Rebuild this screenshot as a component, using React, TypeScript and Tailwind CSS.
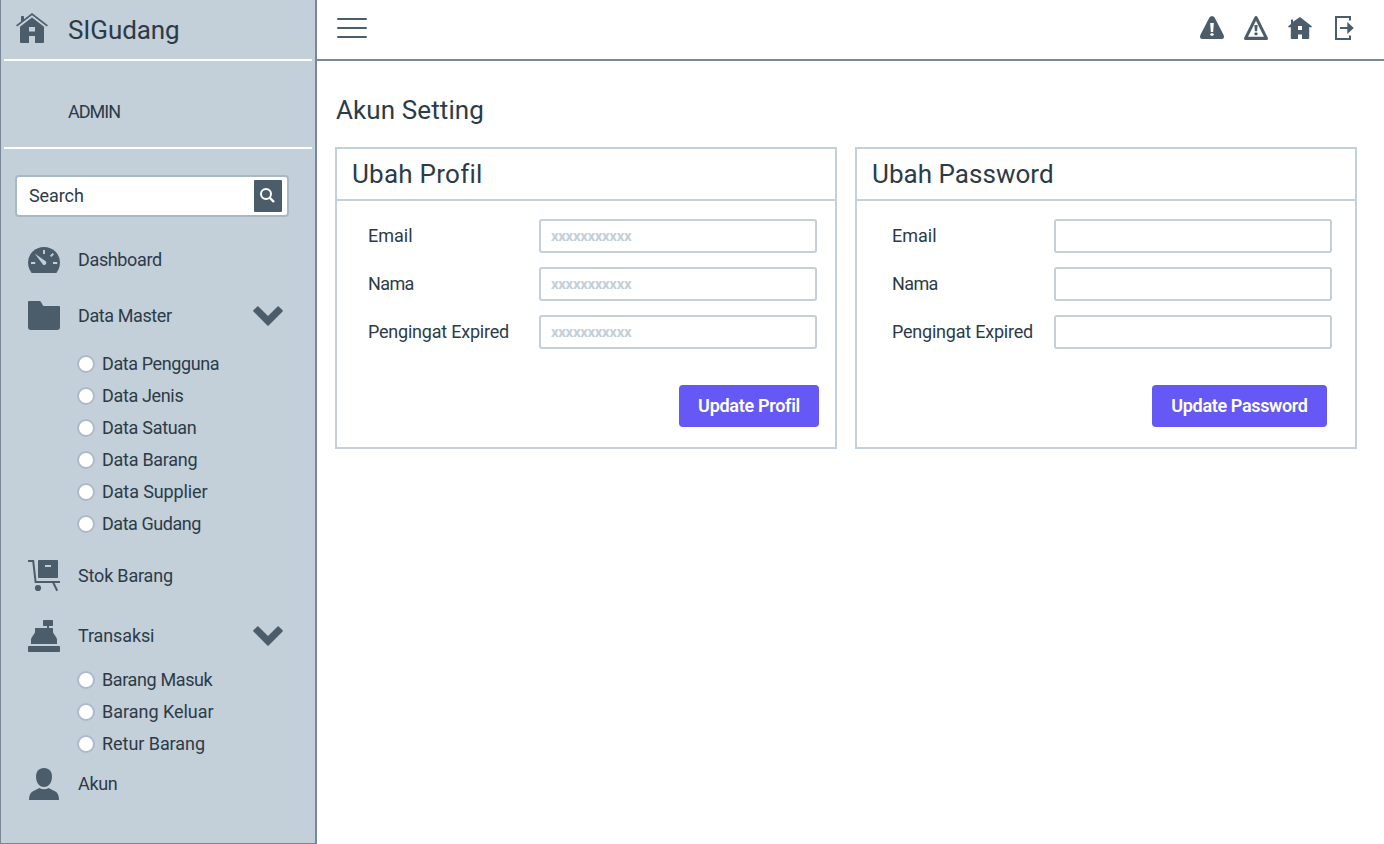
import React from 'react';

type IconProps = { className?: string };

function BrandHouse() {
  return (
    <svg width="32" height="31" viewBox="0 0 32 31" fill="currentColor">
      <path d="M5 3.6Q5 3 5.6 3H7.4Q8 3 8 3.6V7L5 9.4Z" />
      <path d="M.6 12.9L16 1.1L31.4 12.9" fill="none" stroke="currentColor" strokeWidth="1.7" />
      <path
        fillRule="evenodd"
        d="M16 4.6L28 13.8V29Q28 30 27 30H19V23H13V30H5Q4 30 4 29V13.8ZM13 14V18.5H19V14Z"
      />
    </svg>
  );
}

function SmallHouse() {
  return (
    <svg width="24" height="24" viewBox="0 0 24 24" fill="currentColor">
      <path
        fillRule="evenodd"
        d="M3 3.4H5V5.8L12 1L24 10.4L23 11.6L21.2 11V22Q21.2 23 20.2 23H14V18.6H10V23H3.8Q2.8 23 2.8 22V11L1 11.6L0 10.4L3 8ZM10 10V14H14V10Z"
      />
    </svg>
  );
}

function AlertSolid() {
  return (
    <svg width="24" height="24" viewBox="0 0 24 24">
      <path
        d="M12 0Q13.6 0 14.6 1.5L23.5 18.8Q25 23 21.8 23H2.2Q-1 23 .5 18.8L9.4 1.5Q10.4 0 12 0Z"
        fill="currentColor"
      />
      <path d="M10.2 7H13.8L13.2 16H10.8Z" fill="white" />
      <rect x="10.3" y="17.2" width="3.4" height="2.6" rx="1.2" fill="white" />
    </svg>
  );
}

function AlertOutline() {
  return (
    <svg width="24" height="24" viewBox="0 0 24 24">
      <path
        fillRule="evenodd"
        fill="currentColor"
        d="M12 0Q13 0 13.5 1L23.7 21.5Q24.6 24 22.4 24H1.6Q-.6 24 .3 21.5L10.5 1Q11 0 12 0ZM12 4.8L4 20.8H20Z"
      />
      <path d="M10.4 9H13.6L13.1 15.3H10.9Z" fill="currentColor" />
      <rect x="10.4" y="16.5" width="3.2" height="2.8" rx="1" fill="currentColor" />
    </svg>
  );
}

function Exit() {
  return (
    <svg width="19" height="24" viewBox="0 0 19 24">
      <path d="M15 4.5V1H1V23H15V19.5" fill="none" stroke="currentColor" strokeWidth="2" />
      <path d="M5 11H12.3V5.9L18.8 12L12.3 18.1V13H5Z" fill="currentColor" />
    </svg>
  );
}

function Gauge() {
  return (
    <svg width="32" height="32" viewBox="0 0 32 32">
      <path d="M3.6 29Q0 24 0 18.5A16 15.5 0 0 1 32 18.5Q32 24 28.4 29Z" fill="currentColor" />
      <g stroke="#c3cfd9" strokeWidth="1.9">
        <path d="M16 6V10M3 19H7.2M25 19H29.2M22.6 12.4L25.3 9.8" />
      </g>
      <path d="M6.8 9.6L17.7 17.2Q18.5 18 18 20Q17 21.4 15.1 20.7Z" fill="#c3cfd9" />
    </svg>
  );
}

function Folder() {
  return (
    <svg width="32" height="32" viewBox="0 0 32 32" fill="currentColor">
      <path d="M0 2Q0 1 1 1H11.6Q12.3 1 12.8 1.8L15.3 6H31Q32 6 32 7V27Q32 30 29 30H3Q0 30 0 27Z" />
    </svg>
  );
}

function Trolley() {
  return (
    <svg width="32" height="32" viewBox="0 0 32 32">
      <path d="M0 1H5.2L7.6 22H32" fill="none" stroke="currentColor" strokeWidth="2" />
      <rect x="10" y="0" width="20" height="18" rx=".7" fill="currentColor" />
      <rect x="17" y="5" width="6" height="2" fill="#c3cfd9" />
      <circle cx="10" cy="28" r="3.1" fill="currentColor" />
      <path d="M25.2 22.5L29.2 30.8" stroke="currentColor" strokeWidth="2" />
    </svg>
  );
}

function Register() {
  return (
    <svg width="32" height="32" viewBox="0 0 32 32" fill="currentColor">
      <rect x="15" y="0" width="10" height="6" rx=".8" />
      <rect x="19" y="5" width="2" height="4" />
      <path d="M7 8.6Q7 8 7.6 8H24.4Q25 8 25 8.6V12.5L28.6 18Q29 18.8 29 20V24H3V20Q3 18.8 3.4 18L7 12.5Z" />
      <rect x="0" y="26" width="32" height="6" rx=".7" />
    </svg>
  );
}

function Person() {
  return (
    <svg width="32" height="32" viewBox="0 0 32 32" fill="currentColor">
      <path d="M16 0C21.3 0 24 3.8 24 8.5C24 14.5 20.8 19 16 19C11.2 19 8 14.5 8 8.5C8 3.8 10.7 0 16 0Z" />
      <path d="M1 32Q1 25.5 5 23.3Q8 21.7 11.3 20Q16 22.4 20.7 20Q24 21.7 27 23.3Q31 25.5 31 32Z" />
    </svg>
  );
}

function Chevron({ className }: IconProps) {
  return (
    <svg className={className} width="30" height="20" viewBox="0 0 30 20" fill="currentColor">
      <path d="M4.3.4Q4.8-.1 5.4.4L15 9.9L24.6.4Q25.2-.1 25.7.4L29.6 4.3Q30.1 4.8 29.6 5.4L15.6 19.6Q15 20.1 14.4 19.6L.4 5.4Q-.1 4.8.4 4.3Z" />
    </svg>
  );
}

function Magnifier() {
  return (
    <svg width="16" height="16" viewBox="0 0 16 16" fill="none" stroke="white" strokeWidth="2">
      <circle cx="6" cy="6" r="5" />
      <path d="M9.5 9.5L14 14" strokeWidth="2.4" />
    </svg>
  );
}

type ItemProps = {
  icon: React.ReactNode;
  label: string;
  tracking: string;
  size: string;
  expandable?: boolean;
};

function NavItem({ icon, label, tracking, size, expandable }: ItemProps) {
  return (
    <a className={`flex items-center pl-[27px] pr-8 ${size}`}>
      <span className="mr-[18px]">{icon}</span>
      <span className={`text-[#2c3b48] ${tracking}`}>{label}</span>
      {expandable && <Chevron className="ml-auto" />}
    </a>
  );
}

function SubItem({ label, tracking }: { label: string; tracking: string }) {
  return (
    <li className="flex h-8 items-center pl-[76px]">
      <span className="mr-[7px] size-[18px] rounded-full border-2 border-[#adbbc8] bg-white" />
      <span className={`text-[#2c3b48] ${tracking}`}>{label}</span>
    </li>
  );
}

const masterItems = [
  { label: 'Data Pengguna', tracking: 'tracking-[-0.4px]' },
  { label: 'Data Jenis', tracking: 'tracking-[-0.35px]' },
  { label: 'Data Satuan', tracking: 'tracking-[-0.3px]' },
  { label: 'Data Barang', tracking: 'tracking-[-0.27px]' },
  { label: 'Data Supplier', tracking: 'tracking-[-0.12px]' },
  { label: 'Data Gudang', tracking: 'tracking-[-0.46px]' },
];

const transactionItems = [
  { label: 'Barang Masuk', tracking: 'tracking-[-0.38px]' },
  { label: 'Barang Keluar', tracking: 'tracking-[-0.02px]' },
  { label: 'Retur Barang', tracking: 'tracking-[-0.05px]' },
];

function Sidebar() {
  return (
    <aside className="h-full w-[317px] shrink-0 border-r-2 border-b border-l border-[#788896] bg-[#c3cfd9] text-[#4b5c6b]">
      <div className="mx-[3px] flex h-[61px] items-center border-b-2 border-white pl-3">
        <span className="-mt-0.5">
          <BrandHouse />
        </span>
        <span className="ml-5 pt-px text-[26px] tracking-[-0.1px] text-[#2c3b48]">SIGudang</span>
      </div>
      <div className="mx-[3px] flex h-[88px] items-center border-b-2 border-white pt-4 pl-16">
        <span className="tracking-[-1px] text-[#2c3b48]">ADMIN</span>
      </div>
      <div className="mt-[26px] ml-3.5 flex h-[42px] w-[274px] items-center justify-between rounded-[4px] border-2 border-[#a9b8c5] bg-white pr-[5px] pl-3">
        <span className="tracking-[-0.1px] text-[#2c3b48]">Search</span>
        <button className="flex h-8 w-7 items-center justify-center rounded-[1px] bg-[#4b5c6b]">
          <Magnifier />
        </button>
      </div>
      <nav className="mt-[15px]">
        <NavItem icon={<Gauge />} label="Dashboard" tracking="tracking-[-0.36px]" size="h-14" />
        <NavItem icon={<Folder />} label="Data Master" tracking="tracking-[-0.4px]" size="h-14" expandable />
        <ul className="mt-1 mb-1.5">
          {masterItems.map((item) => (
            <SubItem key={item.label} {...item} />
          ))}
        </ul>
        <NavItem icon={<Trolley />} label="Stok Barang" tracking="tracking-[-0.18px]" size="h-[60px]" />
        <NavItem icon={<Register />} label="Transaksi" tracking="tracking-[-0.12px]" size="mt-0.5 h-14" expandable />
        <ul>
          {transactionItems.map((item) => (
            <SubItem key={item.label} {...item} />
          ))}
        </ul>
        <NavItem icon={<Person />} label="Akun" tracking="tracking-[-0.35px]" size="h-12" />
      </nav>
    </aside>
  );
}

function TopBar() {
  return (
    <header className="flex h-[61px] items-center justify-between border-b-2 border-[#788896] pr-[30px] pb-[3px] pl-5 text-[#4b5c6b]">
      <button className="flex w-[30px] flex-col gap-[7px]">
        <span className="h-0.5 w-full rounded-full bg-[#4b5c6b]" />
        <span className="h-0.5 w-full rounded-full bg-[#4b5c6b]" />
        <span className="h-0.5 w-full rounded-full bg-[#4b5c6b]" />
      </button>
      <div className="flex items-center">
        <span className="mr-5"><AlertSolid /></span>
        <span className="mr-5"><AlertOutline /></span>
        <span className="mr-[23px]"><SmallHouse /></span>
        <Exit />
      </div>
    </header>
  );
}

type CardProps = {
  title: string;
  titleTracking: string;
  bodyPadding: string;
  value?: string;
  action: string;
  actionClass: string;
};

const fields = [
  { label: 'Email', tracking: 'tracking-[0px]' },
  { label: 'Nama', tracking: 'tracking-[-0.6px]' },
  { label: 'Pengingat Expired', tracking: 'tracking-[-0.22px]' },
];

function SettingCard({ title, titleTracking, bodyPadding, value, action, actionClass }: CardProps) {
  return (
    <section className="h-[302px] border-2 border-[#c3cfd9]">
      <h2 className={`flex h-[52px] items-center border-b-2 border-[#c3cfd9] pl-[15px] text-[26px] ${titleTracking}`}>
        {title}
      </h2>
      <div className={`flex flex-col gap-3.5 pt-[18px] ${bodyPadding}`}>
        {fields.map((field) => (
          <label key={field.label} className="flex h-[34px] items-center justify-between">
            <span className={field.tracking}>{field.label}</span>
            <span className="flex h-full w-[278px] items-center rounded-[3px] border-2 border-[#c3cfd9] pt-px pl-2.5 text-[15px] font-bold tracking-[-0.34px] text-[#c3cfd9]">
              {value}
            </span>
          </label>
        ))}
      </div>
      <div className="mt-9 flex justify-end">
        <button
          className={`flex h-[42px] items-center justify-center rounded-[4px] bg-[#6558f5] font-semibold text-white ${actionClass}`}
        >
          {action}
        </button>
      </div>
    </section>
  );
}

export default function App() {
  return (
    <div className="flex h-[844px] w-[1384px] overflow-hidden bg-white font-[Roboto,'Liberation_Sans',sans-serif] text-[18px] leading-none whitespace-nowrap text-[#2c3b48]">
      <Sidebar />
      <div className="flex-1">
        <TopBar />
        <main className="pt-9 pl-[18px]">
          <h1 className="pl-px text-[26px] tracking-[0.1px]">Akun Setting</h1>
          <div className="mt-6 grid w-[1022px] grid-cols-2 gap-[18px]">
            <SettingCard
              title="Ubah Profil"
              titleTracking="tracking-[0.25px]"
              bodyPadding="pr-[18px] pl-[31px]"
              value="xxxxxxxxxxx"
              action="Update Profil"
              actionClass="mr-4 w-[140px] tracking-[-0.3px]"
            />
            <SettingCard
              title="Ubah Password"
              titleTracking="tracking-[0.03px]"
              bodyPadding="pr-[23px] pl-[35px]"
              action="Update Password"
              actionClass="mr-7 w-[175px] tracking-[-0.35px]"
            />
          </div>
        </main>
      </div>
    </div>
  );
}
